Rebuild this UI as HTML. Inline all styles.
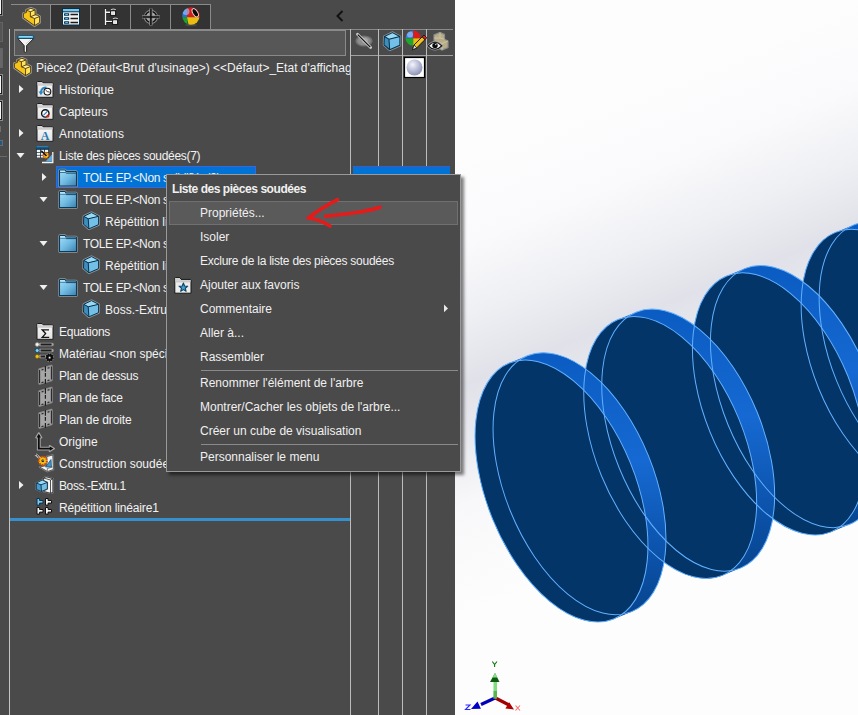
<!DOCTYPE html>
<html><head><meta charset="utf-8">
<style>
*{margin:0;padding:0;box-sizing:border-box}
html,body{width:858px;height:715px;overflow:hidden;background:#4a4a4a}
body{position:relative;font-family:"Liberation Sans",sans-serif;font-size:12px;color:#f2f2f2}
.a{position:absolute}
.t{position:absolute;white-space:nowrap;line-height:14px;height:14px}
.vl{position:absolute;width:1px;background:#bcbcbc}
.hl{position:absolute;height:1px;background:#8a8a8a}
.mi{position:absolute;left:200px;white-space:nowrap;line-height:14px;color:#f0f0f0}
</style></head><body>
<!-- viewport -->
<svg class="a" style="left:0;top:0" width="858" height="715" viewBox="0 0 858 715">
<defs>
<linearGradient id="bg" gradientUnits="userSpaceOnUse" x1="542" y1="353" x2="632" y2="578">
<stop offset="-1" stop-color="#ffffff"/>
</linearGradient>
<linearGradient id="bgg" gradientUnits="userSpaceOnUse" x1="462" y1="153" x2="622" y2="553">
<stop offset="0" stop-color="#fdfdfe"/>
<stop offset="0.2" stop-color="#fafafc"/>
<stop offset="0.36" stop-color="#eeeff3"/>
<stop offset="0.5" stop-color="#e1e2e9"/>
<stop offset="0.62" stop-color="#e9eaef"/>
<stop offset="0.76" stop-color="#f8f8fa"/>
<stop offset="1" stop-color="#fdfdfd"/>
</linearGradient>
<linearGradient id="band" x1="0" y1="0" x2="0" y2="1">
<stop offset="0" stop-color="#0a5cc2"/>
<stop offset="0.4" stop-color="#1669d2"/>
<stop offset="0.75" stop-color="#0b52aa"/>
<stop offset="1" stop-color="#07438a"/>
</linearGradient>
</defs>
<rect x="455" y="0" width="403" height="715" fill="url(#bgg)"/>
<path d="M801.2,303.2 L801.3,298.6 L801.6,294.1 L802.0,289.7 L802.5,285.5 L803.2,281.3 L803.9,277.3 L804.9,273.4 L805.9,269.6 L807.1,265.9 L808.4,262.4 L809.8,259.1 L811.3,255.9 L813.0,252.9 L814.8,250.0 L816.7,247.3 L818.6,244.8 L820.7,242.5 L822.9,240.3 L825.2,238.4 L827.6,236.6 L830.1,235.0 L832.7,233.6 L835.4,232.4 L853.4,225.1 L856.1,224.1 L858.9,223.3 L861.8,222.7 L864.8,222.3 L867.8,222.1 L870.9,222.1 L874.0,222.3 L877.2,222.7 L880.5,223.3 L883.7,224.1 L887.0,225.1 L890.3,226.3 L893.7,227.7 L897.1,229.3 L900.5,231.0 L903.8,233.0 L907.2,235.2 L910.6,237.5 L914.0,240.0 L917.4,242.7 L920.7,245.6 L924.1,248.6 L927.4,251.8 L930.6,255.1 L933.9,258.6 L937.1,262.2 L940.2,266.0 L943.3,269.9 L946.3,274.0 L949.3,278.1 L952.2,282.4 L955.0,286.8 L957.7,291.3 L960.4,295.8 L963.0,300.5 L965.5,305.3 L967.9,310.1 L970.2,315.0 L972.4,319.9 L974.5,324.9 L976.5,330.0 L978.4,335.1 L980.1,340.2 L981.8,345.3 L983.3,350.4 L984.8,355.6 L986.1,360.7 L987.2,365.9 L988.3,371.0 L989.2,376.0 L990.0,381.1 L990.7,386.1 L991.2,391.0 L991.6,395.9 L991.9,400.8 L992.0,405.5 L992.0,410.2 L991.9,414.8 L991.6,419.3 L991.2,423.7 L990.7,427.9 L990.0,432.1 L989.3,436.1 L988.3,440.0 L987.3,443.8 L986.1,447.5 L984.8,451.0 L983.4,454.3 L981.9,457.5 L980.2,460.5 L978.4,463.4 L976.5,466.1 L974.6,468.6 L972.5,470.9 L970.3,473.1 L968.0,475.0 L965.6,476.8 L963.1,478.4 L960.5,479.8 L957.8,481.0 L939.8,488.3 L937.1,489.3 L934.3,490.1 L931.4,490.7 L928.4,491.1 L925.4,491.3 L922.3,491.3 L919.2,491.1 L916.0,490.7 L912.7,490.1 L909.5,489.3 L906.2,488.3 L902.9,487.1 L899.5,485.7 L896.1,484.1 L892.7,482.4 L889.4,480.4 L886.0,478.2 L882.6,475.9 L879.2,473.4 L875.8,470.7 L872.5,467.8 L869.1,464.8 L865.8,461.6 L862.6,458.3 L859.3,454.8 L856.1,451.2 L853.0,447.4 L849.9,443.5 L846.9,439.4 L843.9,435.3 L841.0,431.0 L838.2,426.6 L835.5,422.1 L832.8,417.6 L830.2,412.9 L827.7,408.1 L825.3,403.3 L823.0,398.4 L820.8,393.5 L818.7,388.5 L816.7,383.4 L814.8,378.3 L813.1,373.2 L811.4,368.1 L809.9,363.0 L808.4,357.8 L807.1,352.7 L806.0,347.5 L804.9,342.4 L804.0,337.4 L803.2,332.3 L802.5,327.3 L802.0,322.4 L801.6,317.5 L801.3,312.6 L801.2,307.9Z" fill="url(#band)"/>
<ellipse cx="887.6" cy="360.35" rx="138.2" ry="74.4" transform="rotate(67.8 887.6 360.35)" fill="#033568"/>
<path d="M692.5,346.8 L692.6,342.2 L692.9,337.7 L693.3,333.3 L693.8,329.0 L694.5,324.9 L695.2,320.8 L696.2,316.9 L697.2,313.1 L698.4,309.5 L699.7,306.0 L701.1,302.7 L702.6,299.5 L704.3,296.4 L706.1,293.6 L708.0,290.9 L709.9,288.4 L712.0,286.0 L714.2,283.9 L716.5,281.9 L718.9,280.1 L721.4,278.5 L724.0,277.1 L726.7,275.9 L744.7,268.6 L747.4,267.6 L750.2,266.8 L753.1,266.2 L756.1,265.8 L759.1,265.6 L762.2,265.6 L765.3,265.8 L768.5,266.2 L771.8,266.8 L775.0,267.6 L778.3,268.6 L781.6,269.8 L785.0,271.2 L788.4,272.8 L791.8,274.6 L795.1,276.6 L798.5,278.7 L801.9,281.0 L805.3,283.6 L808.7,286.2 L812.0,289.1 L815.4,292.1 L818.7,295.3 L821.9,298.6 L825.2,302.1 L828.4,305.8 L831.5,309.6 L834.6,313.5 L837.6,317.5 L840.6,321.7 L843.5,325.9 L846.3,330.3 L849.0,334.8 L851.7,339.4 L854.3,344.1 L856.8,348.8 L859.2,353.6 L861.5,358.5 L863.7,363.5 L865.8,368.5 L867.8,373.5 L869.7,378.6 L871.4,383.7 L873.1,388.9 L874.6,394.0 L876.1,399.1 L877.4,404.3 L878.5,409.4 L879.6,414.5 L880.5,419.6 L881.3,424.6 L882.0,429.6 L882.5,434.6 L882.9,439.5 L883.2,444.3 L883.3,449.1 L883.3,453.7 L883.2,458.3 L882.9,462.8 L882.5,467.2 L882.0,471.5 L881.3,475.6 L880.6,479.7 L879.6,483.6 L878.6,487.4 L877.4,491.0 L876.1,494.5 L874.7,497.8 L873.2,501.0 L871.5,504.1 L869.7,506.9 L867.8,509.6 L865.9,512.1 L863.8,514.5 L861.6,516.6 L859.3,518.6 L856.9,520.4 L854.4,522.0 L851.8,523.4 L849.1,524.6 L831.1,531.9 L828.4,532.9 L825.6,533.7 L822.7,534.3 L819.7,534.7 L816.7,534.9 L813.6,534.9 L810.5,534.7 L807.3,534.3 L804.0,533.7 L800.8,532.9 L797.5,531.9 L794.2,530.7 L790.8,529.3 L787.4,527.7 L784.0,525.9 L780.7,523.9 L777.3,521.8 L773.9,519.5 L770.5,516.9 L767.1,514.3 L763.8,511.4 L760.4,508.4 L757.1,505.2 L753.9,501.9 L750.6,498.4 L747.4,494.7 L744.3,490.9 L741.2,487.0 L738.2,483.0 L735.2,478.8 L732.3,474.6 L729.5,470.2 L726.8,465.7 L724.1,461.1 L721.5,456.4 L719.0,451.7 L716.6,446.9 L714.3,442.0 L712.1,437.0 L710.0,432.0 L708.0,427.0 L706.1,421.9 L704.4,416.8 L702.7,411.6 L701.2,406.5 L699.7,401.4 L698.4,396.2 L697.3,391.1 L696.2,386.0 L695.3,380.9 L694.5,375.9 L693.8,370.9 L693.3,365.9 L692.9,361.0 L692.6,356.2 L692.5,351.4Z" fill="url(#band)"/>
<ellipse cx="778.9" cy="403.9" rx="138.2" ry="74.4" transform="rotate(67.8 778.9 403.9)" fill="#033568"/>
<path d="M583.8,390.3 L583.9,385.7 L584.2,381.2 L584.6,376.8 L585.1,372.6 L585.8,368.4 L586.5,364.4 L587.5,360.5 L588.5,356.7 L589.7,353.0 L591.0,349.5 L592.4,346.2 L593.9,343.0 L595.6,340.0 L597.4,337.1 L599.3,334.4 L601.2,331.9 L603.3,329.6 L605.5,327.4 L607.8,325.5 L610.2,323.7 L612.7,322.1 L615.3,320.7 L618.0,319.5 L636.0,312.2 L638.7,311.2 L641.5,310.4 L644.4,309.8 L647.4,309.4 L650.4,309.2 L653.5,309.2 L656.6,309.4 L659.8,309.8 L663.1,310.4 L666.3,311.2 L669.6,312.2 L672.9,313.4 L676.3,314.8 L679.7,316.4 L683.1,318.1 L686.4,320.1 L689.8,322.3 L693.2,324.6 L696.6,327.1 L700.0,329.8 L703.3,332.7 L706.7,335.7 L710.0,338.9 L713.2,342.2 L716.5,345.7 L719.7,349.3 L722.8,353.1 L725.9,357.0 L728.9,361.1 L731.9,365.2 L734.8,369.5 L737.6,373.9 L740.3,378.4 L743.0,382.9 L745.6,387.6 L748.1,392.4 L750.5,397.2 L752.8,402.1 L755.0,407.0 L757.1,412.0 L759.1,417.1 L761.0,422.2 L762.7,427.3 L764.4,432.4 L765.9,437.5 L767.4,442.7 L768.7,447.8 L769.8,453.0 L770.9,458.1 L771.8,463.1 L772.6,468.2 L773.3,473.2 L773.8,478.1 L774.2,483.0 L774.5,487.9 L774.6,492.6 L774.6,497.3 L774.5,501.9 L774.2,506.4 L773.8,510.8 L773.3,515.0 L772.6,519.2 L771.9,523.2 L770.9,527.1 L769.9,530.9 L768.7,534.6 L767.4,538.1 L766.0,541.4 L764.5,544.6 L762.8,547.6 L761.0,550.5 L759.1,553.2 L757.2,555.7 L755.1,558.0 L752.9,560.2 L750.6,562.1 L748.2,563.9 L745.7,565.5 L743.1,566.9 L740.4,568.1 L722.4,575.4 L719.7,576.4 L716.9,577.2 L714.0,577.8 L711.0,578.2 L708.0,578.4 L704.9,578.4 L701.8,578.2 L698.6,577.8 L695.3,577.2 L692.1,576.4 L688.8,575.4 L685.5,574.2 L682.1,572.8 L678.7,571.2 L675.3,569.5 L672.0,567.5 L668.6,565.3 L665.2,563.0 L661.8,560.5 L658.4,557.8 L655.1,554.9 L651.7,551.9 L648.4,548.7 L645.2,545.4 L641.9,541.9 L638.7,538.3 L635.6,534.5 L632.5,530.6 L629.5,526.5 L626.5,522.4 L623.6,518.1 L620.8,513.7 L618.1,509.2 L615.4,504.7 L612.8,500.0 L610.3,495.2 L607.9,490.4 L605.6,485.5 L603.4,480.6 L601.3,475.6 L599.3,470.5 L597.4,465.4 L595.7,460.3 L594.0,455.2 L592.5,450.1 L591.0,444.9 L589.7,439.8 L588.6,434.6 L587.5,429.5 L586.6,424.5 L585.8,419.4 L585.1,414.4 L584.6,409.5 L584.2,404.6 L583.9,399.7 L583.8,395.0Z" fill="url(#band)"/>
<ellipse cx="670.2" cy="447.45" rx="138.2" ry="74.4" transform="rotate(67.8 670.2 447.45)" fill="#033568"/>
<path d="M475.1,433.9 L475.2,429.3 L475.5,424.8 L475.9,420.4 L476.4,416.1 L477.1,412.0 L477.8,407.9 L478.8,404.0 L479.8,400.2 L481.0,396.6 L482.3,393.1 L483.7,389.8 L485.2,386.6 L486.9,383.5 L488.7,380.7 L490.6,378.0 L492.5,375.5 L494.6,373.1 L496.8,371.0 L499.1,369.0 L501.5,367.2 L504.0,365.6 L506.6,364.2 L509.3,363.0 L527.3,355.7 L530.0,354.7 L532.8,353.9 L535.7,353.3 L538.7,352.9 L541.7,352.7 L544.8,352.7 L547.9,352.9 L551.1,353.3 L554.4,353.9 L557.6,354.7 L560.9,355.7 L564.2,356.9 L567.6,358.3 L571.0,359.9 L574.4,361.7 L577.7,363.7 L581.1,365.8 L584.5,368.1 L587.9,370.7 L591.3,373.3 L594.6,376.2 L598.0,379.2 L601.3,382.4 L604.5,385.7 L607.8,389.2 L611.0,392.9 L614.1,396.7 L617.2,400.6 L620.2,404.6 L623.2,408.8 L626.1,413.0 L628.9,417.4 L631.6,421.9 L634.3,426.5 L636.9,431.2 L639.4,435.9 L641.8,440.7 L644.1,445.6 L646.3,450.6 L648.4,455.6 L650.4,460.6 L652.3,465.7 L654.0,470.8 L655.7,476.0 L657.2,481.1 L658.7,486.2 L660.0,491.4 L661.1,496.5 L662.2,501.6 L663.1,506.7 L663.9,511.7 L664.6,516.7 L665.1,521.7 L665.5,526.6 L665.8,531.4 L665.9,536.2 L665.9,540.8 L665.8,545.4 L665.5,549.9 L665.1,554.3 L664.6,558.6 L663.9,562.7 L663.2,566.8 L662.2,570.7 L661.2,574.5 L660.0,578.1 L658.7,581.6 L657.3,584.9 L655.8,588.1 L654.1,591.2 L652.3,594.0 L650.4,596.7 L648.5,599.2 L646.4,601.6 L644.2,603.7 L641.9,605.7 L639.5,607.5 L637.0,609.1 L634.4,610.5 L631.7,611.7 L613.7,619.0 L611.0,620.0 L608.2,620.8 L605.3,621.4 L602.3,621.8 L599.3,622.0 L596.2,622.0 L593.1,621.8 L589.9,621.4 L586.6,620.8 L583.4,620.0 L580.1,619.0 L576.8,617.8 L573.4,616.4 L570.0,614.8 L566.6,613.0 L563.3,611.0 L559.9,608.9 L556.5,606.6 L553.1,604.0 L549.7,601.4 L546.4,598.5 L543.0,595.5 L539.7,592.3 L536.5,589.0 L533.2,585.5 L530.0,581.8 L526.9,578.0 L523.8,574.1 L520.8,570.1 L517.8,565.9 L514.9,561.7 L512.1,557.3 L509.4,552.8 L506.7,548.2 L504.1,543.5 L501.6,538.8 L499.2,534.0 L496.9,529.1 L494.7,524.1 L492.6,519.1 L490.6,514.1 L488.7,509.0 L487.0,503.9 L485.3,498.7 L483.8,493.6 L482.3,488.5 L481.0,483.3 L479.9,478.2 L478.8,473.1 L477.9,468.0 L477.1,463.0 L476.4,458.0 L475.9,453.0 L475.5,448.1 L475.2,443.3 L475.1,438.5Z" fill="url(#band)"/>
<ellipse cx="561.5" cy="491.0" rx="138.2" ry="74.4" transform="rotate(67.8 561.5 491.0)" fill="#033568"/>
<g fill="none" stroke="#62b0ff" stroke-width="1">
<ellipse cx="887.6" cy="360.35" rx="138.2" ry="74.4" transform="rotate(67.8 887.6 360.35)"/>
<ellipse cx="905.6" cy="353.05" rx="138.2" ry="74.4" transform="rotate(67.8 905.6 353.05)"/>
<ellipse cx="778.9" cy="403.9" rx="138.2" ry="74.4" transform="rotate(67.8 778.9 403.9)"/>
<ellipse cx="796.9" cy="396.59999999999997" rx="138.2" ry="74.4" transform="rotate(67.8 796.9 396.59999999999997)"/>
<ellipse cx="670.2" cy="447.45" rx="138.2" ry="74.4" transform="rotate(67.8 670.2 447.45)"/>
<ellipse cx="688.2" cy="440.15" rx="138.2" ry="74.4" transform="rotate(67.8 688.2 440.15)"/>
<ellipse cx="561.5" cy="491.0" rx="138.2" ry="74.4" transform="rotate(67.8 561.5 491.0)"/>
<ellipse cx="579.5" cy="483.7" rx="138.2" ry="74.4" transform="rotate(67.8 579.5 483.7)"/>
</g>
</svg>
<!-- left strip -->
<div class="a" style="left:0;top:0;width:3px;height:16px;background:#7e7e7e"></div>
<div class="a" style="left:0;top:0;width:2px;height:15px;background:#1e1e1e"></div>
<div class="a" style="left:0;top:0;width:1px;height:14px;background:#f4f4f4"></div>
<div class="a" style="left:0;top:22px;width:3px;height:20px;background:#636363"></div>
<div class="a" style="left:0;top:23px;width:2px;height:18px;background:#555"></div>
<div class="a" style="left:0;top:48px;width:3px;height:20px;background:#636363"></div>
<div class="a" style="left:0;top:49px;width:2px;height:18px;background:#666"></div>
<div class="a" style="left:0;top:74px;width:3px;height:21px;background:#8a8a8a"></div>
<div class="a" style="left:0;top:75px;width:2px;height:19px;background:#1e1e1e"></div>
<div class="a" style="left:0;top:76px;width:1px;height:17px;background:#f6f6f6"></div>
<div class="a" style="left:0;top:100px;width:3px;height:21px;background:#8a8a8a"></div>
<div class="a" style="left:0;top:101px;width:2px;height:19px;background:#1e1e1e"></div>
<div class="a" style="left:0;top:102px;width:1px;height:17px;background:#f6f6f6"></div>
<div class="a" style="left:0;top:126px;width:1px;height:6px;background:#6e6e6e"></div>
<div class="a" style="left:0;top:140px;width:3px;height:6px;background:#6a6a6a"></div>
<div class="a" style="left:0;top:141px;width:2px;height:4px;background:#1a5a8a"></div>
<div class="hl" style="left:0;top:156px;width:7px;background:#6a6a6a"></div>

<!-- tab bar -->
<div class="hl" style="left:11px;top:4px;width:200px"></div>
<div class="a" style="left:51px;top:5px;width:39px;height:24px;background:#333"></div>
<div class="a" style="left:91px;top:5px;width:39px;height:24px;background:#333"></div>
<div class="a" style="left:131px;top:5px;width:39px;height:24px;background:#333"></div>
<div class="a" style="left:171px;top:5px;width:39px;height:24px;background:#333"></div>
<div class="vl" style="left:50px;top:5px;height:25px;background:#8a8a8a"></div>
<div class="vl" style="left:90px;top:5px;height:25px;background:#8a8a8a"></div>
<div class="vl" style="left:130px;top:5px;height:25px;background:#8a8a8a"></div>
<div class="vl" style="left:170px;top:5px;height:25px;background:#8a8a8a"></div>
<div class="vl" style="left:210px;top:5px;height:25px;background:#8a8a8a"></div>
<!-- collapse chevron -->
<svg class="a" style="left:334px;top:8px" width="12" height="16"><path d="M8.5,3 L3.5,8 L8.5,13" fill="none" stroke="#111" stroke-width="2"/></svg>

<!-- filter box -->
<div class="a" style="left:14px;top:29px;width:332px;height:27px;background:#575757;border:1px solid #8a8a8a;border-top:2px solid #8a8a8a"></div>
<div class="hl" style="left:346px;top:29px;width:107px"></div>
<div class="hl" style="left:351px;top:55px;width:102px;background:#a0a0a0"></div>
<!-- tree left line -->
<div class="vl" style="left:9px;top:29px;height:686px;background:#c4c4c4"></div>
<!-- column separators -->
<div class="vl" style="left:350px;top:29px;height:686px"></div>
<div class="vl" style="left:378px;top:29px;height:686px"></div>
<div class="vl" style="left:402px;top:29px;height:686px"></div>
<div class="vl" style="left:426px;top:29px;height:686px"></div>

<!-- selection highlight -->
<div class="a" style="left:56px;top:166px;width:200px;height:22px;background:#0073d6;border:1px solid #3c64dc"></div>
<div class="a" style="left:353px;top:166px;width:97px;height:8px;background:#0073d6;border-top:1px solid #4458c4"></div>
<!-- rollback bar -->
<div class="a" style="left:10px;top:518px;width:340px;height:3px;background:#3491cd"></div>

<!-- tree text -->
<div class="t" style="left:36px;top:61px;width:314px;overflow:hidden">Pièce2 (Défaut&lt;Brut d'usinage&gt;) &lt;&lt;Défaut&gt;_Etat d'affichage-1&gt;</div>
<div class="t" style="left:59px;top:83px;letter-spacing:0.1px">Historique</div>
<div class="t" style="left:59px;top:105px">Capteurs</div>
<div class="t" style="left:59px;top:127px;letter-spacing:0.15px">Annotations</div>
<div class="t" style="left:59px;top:149px;letter-spacing:-0.3px">Liste des pièces soudées(7)</div>
<div class="t" style="left:83px;top:171px;letter-spacing:-0.35px">TOLE EP.&lt;Non solidifié&gt;(3)</div>
<div class="t" style="left:83px;top:193px;letter-spacing:-0.35px">TOLE EP.&lt;Non solidifié&gt;(3)</div>
<div class="t" style="left:105px;top:215px">Répétition linéaire1</div>
<div class="t" style="left:83px;top:237px;letter-spacing:-0.35px">TOLE EP.&lt;Non solidifié&gt;(2)</div>
<div class="t" style="left:105px;top:259px">Répétition linéaire1</div>
<div class="t" style="left:83px;top:281px;letter-spacing:-0.35px">TOLE EP.&lt;Non solidifié&gt;(2)</div>
<div class="t" style="left:105px;top:303px">Boss.-Extru.1</div>
<div class="t" style="left:59px;top:325px;letter-spacing:-0.25px">Equations</div>
<div class="t" style="left:59px;top:347px">Matériau &lt;non spécifié&gt;</div>
<div class="t" style="left:59px;top:369px;letter-spacing:-0.2px">Plan de dessus</div>
<div class="t" style="left:59px;top:391px;letter-spacing:-0.25px">Plan de face</div>
<div class="t" style="left:59px;top:413px;letter-spacing:-0.1px">Plan de droite</div>
<div class="t" style="left:59px;top:435px">Origine</div>
<div class="t" style="left:59px;top:457px">Construction soudée</div>
<div class="t" style="left:59px;top:479px;letter-spacing:-0.4px">Boss.-Extru.1</div>
<div class="t" style="left:59px;top:501px;letter-spacing:-0.15px">Répétition linéaire1</div>

<!-- expanders -->
<svg class="a" style="left:0;top:0" width="350" height="520">
<g fill="#f0f0f0">
<path d="M19,85 L23.5,89 L19,93Z"/>
<path d="M19,129 L23.5,133 L19,137Z"/>
<path d="M16.5,153 L24.5,153 L20.5,158Z"/>
<path d="M42,173 L46.5,177 L42,181Z"/>
<path d="M39.5,197 L47.5,197 L43.5,202Z"/>
<path d="M39.5,241 L47.5,241 L43.5,246Z"/>
<path d="M39.5,285 L47.5,285 L43.5,290Z"/>
<path d="M19,481 L23.5,485 L19,489Z"/>
</g>
</svg>

<svg class="a" style="left:0;top:0" width="455" height="715" viewBox="0 0 455 715">
<defs>
<linearGradient id="gfold" x1="0" y1="0" x2="1" y2="1"><stop offset="0" stop-color="#a6e0f8"/><stop offset="0.5" stop-color="#72bce4"/><stop offset="1" stop-color="#3a82ae"/></linearGradient>
<linearGradient id="gwf" x1="0" y1="0" x2="0" y2="1"><stop offset="0" stop-color="#fafafa"/><stop offset="1" stop-color="#e2e2e2"/></linearGradient>
<radialGradient id="gsph" cx="0.38" cy="0.32" r="0.7"><stop offset="0" stop-color="#f4f5fb"/><stop offset="0.55" stop-color="#b9bdd6"/><stop offset="1" stop-color="#8d92b4"/></radialGradient>
<symbol id="part" overflow="visible">
<path d="M1.4,6.4 L4.4,5.4 L4.4,3.2 L8.9,1.3 L13.1,2.9 L13.1,7.9 L15.2,8.1 L17.6,9.5 L17.6,15.5 L12.5,18.6 L1.4,10.6Z" fill="none" stroke="#9c9c9c" stroke-width="2.6" stroke-linejoin="round"/>
<path d="M1.4,6.4 L4.4,5.4 L4.4,3.2 L8.9,1.3 L13.1,2.9 L13.1,7.9 L15.2,8.1 L17.6,9.5 L17.6,15.5 L12.5,18.6 L1.4,10.6Z" fill="#f4c419"/>
<path d="M4.4,3.2 L8.9,1.3 L13.1,2.9 L8.4,4.7Z" fill="#fff2a6"/>
<path d="M8.4,4.7 L13.1,2.9 L13.1,7.9 L8.4,9.8Z" fill="#fde65e"/>
<path d="M8.4,9.8 L13.1,7.9 L17.6,9.5 L12.6,11.5Z" fill="#fff0a0"/>
<path d="M12.6,11.5 L17.6,9.5 L17.6,15.5 L12.5,18.6Z" fill="#fde45a"/>
<path d="M1.4,6.4 L4.4,5.4 L4.4,3.2 L8.9,1.3 L13.1,2.9 L13.1,7.9 L15.2,8.1 L17.6,9.5 L17.6,15.5 L12.5,18.6 L1.4,10.6Z M4.4,3.2 L8.4,4.7 L13.1,2.9 M8.4,4.7 L8.4,9.8 L12.6,11.5 L17.6,9.5 M12.6,11.5 L12.5,18.6 M8.4,9.8 L13.1,7.9" fill="none" stroke="#4f3500" stroke-width="0.9" stroke-linejoin="round"/>
</symbol>
<symbol id="wfold" overflow="visible">
<path d="M0.5,16.3 L0.5,1 Q0.5,0.5 1,0.5 L5.6,0.5 L6.6,2 L16,2 L16.5,2.5 L16.5,16.3Z" fill="url(#gwf)" stroke="#1e1e1e" stroke-width="1"/>
<path d="M1,1 L5.4,1 L6.4,2.5 L16,2.5 L16,4 L1,4Z" fill="#d4d4d4"/>
<path d="M1,4.2 L16,4.2" stroke="#bdbdbd" stroke-width="0.8"/>
</symbol>
<symbol id="bfold" overflow="visible">
<path d="M0.5,16.5 L0.5,1.2 Q0.5,0.5 1.2,0.5 L6,0.5 L7,2 L17,2 L17.5,2.6 L17.5,16.5Z" fill="none" stroke="#9a9a9a" stroke-width="2.4" stroke-linejoin="round"/>
<path d="M0.5,16.5 L0.5,1.2 Q0.5,0.5 1.2,0.5 L6,0.5 L7,2 L17,2 L17.5,2.6 L17.5,16.5Z" fill="url(#gfold)" stroke="#0b3b5c" stroke-width="1.1" stroke-linejoin="round"/>
<path d="M1.1,3 L6.4,3 L7.2,3.6 L17,3.6" fill="none" stroke="#0b3b5c" stroke-width="0.9"/>
<path d="M1.2,1.2 L5.8,1.2 L6.7,2.7 L1.2,2.7Z" fill="#b8ecff"/>
</symbol>
<symbol id="cube" overflow="visible">
<path d="M0.8,4.3 L8.5,0.6 L15.6,4.3 L15.6,12.6 L5.9,16.9 L0.5,12.2Z" fill="none" stroke="#9a9a9a" stroke-width="2.4" stroke-linejoin="round"/>
<path d="M0.8,4.3 L8.5,0.6 L15.6,4.3 L5.2,6.8Z" fill="#9ad8f4"/>
<path d="M0.8,4.3 L5.2,6.8 L5.9,16.9 L0.5,12.2Z" fill="#3f8dbc"/>
<path d="M5.2,6.8 L15.6,4.3 L15.6,12.6 L5.9,16.9Z" fill="#72c0e8"/>
<path d="M0.8,4.3 L8.5,0.6 L15.6,4.3 L15.6,12.6 L5.9,16.9 L0.5,12.2Z M0.8,4.3 L5.2,6.8 L15.6,4.3 M5.2,6.8 L5.9,16.9" fill="none" stroke="#06334f" stroke-width="1" stroke-linejoin="round"/>
</symbol>
<symbol id="plane" overflow="visible">
<path d="M5.5,3.5 L17.5,0 L17.5,14 L5.5,17.5Z" fill="#a2a2a2" stroke="#8e8e8e" stroke-width="2.4" stroke-linejoin="round"/>
<path d="M5.5,3.5 L17.5,0 L17.5,14 L5.5,17.5Z" fill="#a6a6a6"/>
<path d="M5.6,4 L5.6,17 M17.4,0.6 L17.4,13.5 M7.5,4 L9.5,3.4 M13.5,2.2 L15.5,1.6 M7.5,16.6 L9.5,16 M13.5,14.6 L15.5,14" stroke="#262626" stroke-width="1.1"/>
<path d="M11.4,0 L11.4,18" stroke="#1e1e1e" stroke-width="1.2" stroke-dasharray="5.7,1.3,3.8,2.2,5"/>
</symbol>
</defs>

<!-- tab icons -->
<use href="#part" x="22" y="7"/>
<g>
<rect x="62.5" y="8.5" width="17" height="16.5" fill="#f2f2f2" stroke="#05304e" stroke-width="1"/>
<rect x="62.5" y="8.5" width="17" height="3.3" fill="#7cc8ec" stroke="#05304e" stroke-width="1"/>
<g fill="#05385c"><rect x="64" y="13.2" width="5.2" height="2.6" rx="0.5"/><rect x="64" y="17.2" width="5.2" height="2.6" rx="0.5"/><rect x="64" y="21.2" width="5.2" height="2.6" rx="0.5"/></g>
<g fill="#7cc8ec"><rect x="65.3" y="14.1" width="2.6" height="0.9"/><rect x="65.3" y="18.1" width="2.6" height="0.9"/><rect x="65.3" y="22.1" width="2.6" height="0.9"/></g>
<g stroke="#1a1a1a" stroke-width="1.3"><path d="M70.5,14.5 L78,14.5 M70.5,18.5 L78,18.5 M70.5,22.5 L78,22.5"/></g>
</g>
<g>
<path d="M105.5,8.8 L105.5,25.2 M106,12.3 L110.8,12.3 M106,21.4 L112.8,21.4" stroke="#111" stroke-width="2.6"/>
<path d="M105.5,9 L105.5,25 M106,12.3 L110.8,12.3 M106,21.4 L112.8,21.4" stroke="#f4f4f4" stroke-width="1.4"/>
<rect x="110.6" y="10.8" width="5" height="4.6" fill="#f8f8f8" stroke="#111" stroke-width="1"/>
<rect x="111.8" y="12" width="2.6" height="2.2" fill="#e0e0e0"/>
<path d="M110.8,9.8 Q113,8.3 115.8,9.6" stroke="#d0d0d0" stroke-width="1" fill="none"/>
<rect x="112.6" y="19.8" width="5" height="4.6" fill="#f8f8f8" stroke="#111" stroke-width="1"/>
<rect x="113.8" y="21" width="2.6" height="2.2" fill="#e0e0e0"/>
<path d="M112.8,18.8 Q115,17.3 117.8,18.6" stroke="#d0d0d0" stroke-width="1" fill="none"/>
</g>
<g>
<circle cx="150.9" cy="16.9" r="5.5" fill="#9c9c9c" stroke="#8a8a8a" stroke-width="3.2"/>
<circle cx="150.9" cy="16.9" r="5.5" fill="#a8a8a8" stroke="#101010" stroke-width="1.5"/>
<path d="M142,16.9 L159.8,16.9 M150.9,8.4 L150.9,25.4" stroke="#8a8a8a" stroke-width="3.4"/>
<path d="M142.3,16.9 L159.5,16.9 M150.9,8.7 L150.9,25.1" stroke="#0c0c0c" stroke-width="1.5"/>
</g>
<g>
<ellipse cx="191" cy="25" rx="6" ry="1.3" fill="#555" opacity="0.6"/>
<clipPath id="cs1"><circle cx="190.9" cy="16" r="8.7"/></clipPath>
<g clip-path="url(#cs1)">
<rect x="181" y="6" width="6.5" height="11.5" fill="#2f6fd0"/>
<rect x="187" y="6" width="14" height="11.5" fill="#d81c1c"/>
<rect x="181" y="17.3" width="6.5" height="10" fill="#1aa52a"/>
<path d="M187,17.3 L201,17.3 L201,27 L189,27Z" fill="#e9bd12"/>
<circle cx="186" cy="11.5" r="3.5" fill="#9fd0ff" opacity="0.6"/>
<ellipse cx="195.2" cy="12.7" rx="2.4" ry="4.6" transform="rotate(-32 195.2 12.7)" fill="#0a0a0a" stroke="#f0d0d0" stroke-width="0.9"/>
</g>
</g>

<!-- filter icon -->
<g>
<path d="M17.9,38.5 L24.2,45.6 L24.2,51.6 Q25.4,53 26.6,51.6 L26.6,45.6 L33.6,38.5Z" fill="#f4f4f4" stroke="#151515" stroke-width="0.9" stroke-linejoin="round"/>
<path d="M26,44 L31,39" stroke="#c8c8c8" stroke-width="0.8"/>
<rect x="17.2" y="35.2" width="17" height="3.6" rx="1.6" fill="#0e5a86" />
<rect x="18.4" y="36" width="14.6" height="1.8" rx="0.9" fill="#8ad6f6"/>
</g>
<!-- root part icon -->
<use href="#part" x="13" y="57"/>

<!-- tree icons -->
<use href="#wfold" x="36.5" y="81"/>
<path d="M46.5,87.6 Q41.6,87.6 40.9,92.2" stroke="#2a86c4" stroke-width="2" fill="none"/>
<path d="M38.6,91.4 L43.4,91.4 L40.9,95.2Z" fill="#2a86c4"/>
<circle cx="47.4" cy="91.6" r="3.4" fill="#fff" stroke="#111" stroke-width="1.1"/>
<path d="M47.4,91.6 L45.6,90.2 M47.4,91.6 L49.8,92.2" stroke="#111" stroke-width="0.8"/>
<use href="#wfold" x="36.5" y="103"/>
<circle cx="45.3" cy="113.4" r="3.7" fill="#fafafa" stroke="#111" stroke-width="1.4"/>
<path d="M43.4,115.3 L47.8,110.8" stroke="#2878c0" stroke-width="1.1"/>
<circle cx="47.9" cy="115.9" r="1.5" fill="#e02010"/>
<use href="#wfold" x="36.5" y="125"/>
<text x="45" y="140" font-family="Liberation Serif" font-weight="bold" font-size="12" fill="#2a78b4" text-anchor="middle">A</text>

<g>
<rect x="36" y="146" width="13" height="12" fill="#1a2a36"/>
<rect x="36" y="146" width="13" height="3" fill="#0a4a76"/>
<rect x="36.5" y="146.4" width="12" height="0.8" fill="#4aa0d0"/>
<g fill="#f4f4f4">
<rect x="36.8" y="149.8" width="3.2" height="2.2"/><rect x="40.8" y="149.8" width="3.4" height="2.2"/><rect x="45" y="149.8" width="3.2" height="2.2"/>
<rect x="36.8" y="152.7" width="3.2" height="2.2"/><rect x="40.8" y="152.7" width="3.4" height="2.2"/><rect x="45" y="152.7" width="3.2" height="2.2"/>
<rect x="36.8" y="155.6" width="3.2" height="2.0"/><rect x="40.8" y="155.6" width="3.4" height="2.0"/>
</g>
<path d="M52.8,152 L52.8,162.5 L42,162.5" stroke="#f2f2f2" stroke-width="1.3" fill="none"/>
<path d="M45.5,161.5 L52,161.5 L52,154.5Z" fill="#5aa8dc"/>
<circle cx="46" cy="155.5" r="2.7" fill="#f2c418" stroke="#d04a00" stroke-width="1.5" stroke-dasharray="1.2,0.9"/>
<path d="M41.2,150.8 L46,155.5" stroke="#111" stroke-width="1.5"/>
<circle cx="46" cy="155.5" r="0.8" fill="#111"/>
</g>

<use href="#bfold" x="59" y="169.5"/>
<use href="#bfold" x="59" y="191"/>
<use href="#cube" x="83" y="212"/>
<use href="#bfold" x="59" y="235"/>
<use href="#cube" x="83" y="256"/>
<use href="#bfold" x="59" y="279"/>
<use href="#cube" x="83" y="300"/>

<use href="#wfold" x="36.5" y="323"/>
<path d="M49,329.8 L42.2,329.8 L45.6,333.6 L42.2,337.4 L49.2,337.4" fill="none" stroke="#111" stroke-width="1.3"/>

<g>
<path d="M40.2,344.5 L52,344.5 M40.2,350.5 L52,350.5 M40.2,356.5 L45.5,356.5" stroke="#a0a0a0" stroke-width="3.6" stroke-linecap="round"/>
<path d="M40.6,344.5 L51.6,344.5 M40.6,350.5 L51.6,350.5 M40.6,356.5 L45,356.5" stroke="#1e1e1e" stroke-width="2" />
<circle cx="37.2" cy="344.5" r="1.9" fill="#f4f4f4" stroke="#8a8a8a" stroke-width="0.7"/>
<circle cx="37.2" cy="350.5" r="2" fill="#86d2f6" stroke="#0a4a72" stroke-width="0.9"/>
<circle cx="37.2" cy="356.5" r="2" fill="#f2c414" stroke="#7a5a00" stroke-width="0.7"/>
<circle cx="49.6" cy="357.6" r="4.4" fill="#a0a0a0" opacity="0.8"/>
<circle cx="49.6" cy="357.6" r="3.4" fill="#0c0c0c" stroke="#0c0c0c" stroke-width="1.6" stroke-dasharray="1.3,1"/>
<rect x="48.7" y="356.7" width="1.8" height="1.8" fill="#f4f4f4"/>
</g>

<use href="#plane" x="34" y="366"/>
<use href="#plane" x="34" y="388"/>
<use href="#plane" x="34" y="410"/>

<g>
<path d="M38.8,435 L38.8,448.6 L51,448.6" fill="none" stroke="#a6a6a6" stroke-width="3.8"/>
<path d="M36,437.6 L38.8,433 L41.6,437.6Z M49.6,445.8 L54.2,448.6 L49.6,451.4Z" fill="#a6a6a6" stroke="#a6a6a6" stroke-width="1.6" stroke-linejoin="round"/>
<path d="M38.8,435.5 L38.8,448.6 L50.5,448.6" fill="none" stroke="#0c0c0c" stroke-width="1.8"/>
<path d="M36.6,437.4 L38.8,433.8 L41,437.4Z M49.8,446.4 L53.4,448.6 L49.8,450.8Z" fill="#0c0c0c"/>
</g>

<g>
<path d="M46.8,456.5 L52.8,455 L53.4,469.5 L47.5,471.5 L39.6,467 L46.8,465.5Z" fill="#f4f4f4" stroke="#9a9a9a" stroke-width="1.6" stroke-linejoin="round"/>
<path d="M46.8,456.5 L52.8,455 L53.4,469.5 L47.5,471.5 L39.6,467 L46.8,465.5Z" fill="#f4f4f4" stroke="#3a3a3a" stroke-width="0.8" stroke-linejoin="round"/>
<path d="M47.5,471.5 L47.2,468.6 L52.6,467" stroke="#555" stroke-width="0.7" fill="none"/>
<path d="M45.5,467 L51,459.5 L51.5,467Z" fill="#3f93cc" stroke="#0b4a70" stroke-width="0.7"/>
<path d="M35.5,454.3 L42.6,460.6" stroke="#e8e8e8" stroke-width="2.4"/>
<path d="M35.5,454.3 L42.6,460.6" stroke="#111" stroke-width="1.3" stroke-dasharray="1,0.8"/>
<circle cx="42.8" cy="460.8" r="4.1" fill="#f0c018" stroke="#d84a06" stroke-width="2" stroke-dasharray="1.6,1.2"/>
<circle cx="42.8" cy="460.8" r="1.3" fill="#111"/>
<circle cx="43" cy="460.6" r="0.5" fill="#fff"/>
</g>

<g>
<path d="M43.5,478 L46,476.6 L53,478.6 L53,492.5 L50.5,493.4 L43.5,491.5Z" fill="#f6f6f6" stroke="#9a9a9a" stroke-width="1.4" stroke-linejoin="round"/>
<path d="M43.5,478 L46,476.6 L53,478.6 L53,492.5 L50.5,493.4 L43.5,491.5Z M43.5,478 L50.5,480 L53,478.6 M50.5,480 L50.5,493.4" fill="none" stroke="#2a2a2a" stroke-width="0.8"/>
<path d="M36.3,483 L42.2,480 L47.4,482.4 L47.4,489 L41.5,491.6 L36.3,489.4Z" fill="#72c0e8" stroke="#9a9a9a" stroke-width="1.4" stroke-linejoin="round"/>
<path d="M36.3,483 L42.2,480 L47.4,482.4 L41,484.8Z" fill="#9ad8f4"/>
<path d="M36.3,483 L41,484.8 L41.5,491.6 L36.3,489.4Z" fill="#4a98c8"/>
<path d="M36.3,483 L42.2,480 L47.4,482.4 L47.4,489 L41.5,491.6 L36.3,489.4Z M36.3,483 L41,484.8 L47.4,482.4 M41,484.8 L41.5,491.6" fill="none" stroke="#06334f" stroke-width="0.9" stroke-linejoin="round"/>
</g>

<g>
<path d="M37,498.5 L39.6,498.5 L39.6,500.5 L43,500.5 L43,503.1 L39.6,503.1 L39.6,505.1 L37,505.1Z" fill="#7ccaf0" stroke="#06334f" stroke-width="1" stroke-linejoin="round"/><path d="M45.5,498.5 L48.1,498.5 L48.1,500.5 L51.5,500.5 L51.5,503.1 L48.1,503.1 L48.1,505.1 L45.5,505.1Z" fill="#f6f6f6" stroke="#101010" stroke-width="1" stroke-linejoin="round"/><path d="M37,507.5 L39.6,507.5 L39.6,509.5 L43,509.5 L43,512.1 L39.6,512.1 L39.6,514.1 L37,514.1Z" fill="#f6f6f6" stroke="#101010" stroke-width="1" stroke-linejoin="round"/><path d="M45.5,507.5 L48.1,507.5 L48.1,509.5 L51.5,509.5 L51.5,512.1 L48.1,512.1 L48.1,514.1 L45.5,514.1Z" fill="#f6f6f6" stroke="#101010" stroke-width="1" stroke-linejoin="round"/>
</g>

<!-- column header icons -->
<g>
<ellipse cx="364" cy="41" rx="8.6" ry="5.6" fill="#7a7a7a" opacity="0.8"/>
<ellipse cx="364" cy="41" rx="6.8" ry="4.2" fill="#8e8e8e"/>
<ellipse cx="365" cy="40.5" rx="3" ry="2.6" fill="#a6a6a6"/>
<path d="M357.5,34.3 L370.6,47.4" stroke="#d0d0d0" stroke-width="2.8" stroke-linecap="round"/>
<path d="M357.8,34.6 L370.3,47.1" stroke="#151515" stroke-width="1.3"/>
</g>
<use href="#cube" x="383.5" y="32" transform="translate(383.5 32) scale(1.05) translate(-383.5 -32)"/>
<g>
<clipPath id="cs2"><circle cx="413.2" cy="38.2" r="7.6"/></clipPath>
<g clip-path="url(#cs2)">
<rect x="405" y="30" width="8.5" height="8.5" fill="#3a78d8"/>
<rect x="413.3" y="30" width="9" height="8.5" fill="#dc1c1c"/>
<rect x="405" y="38.4" width="8.5" height="8.5" fill="#1ca82a"/>
<rect x="413.3" y="38.4" width="9" height="8.5" fill="#e8c010"/>
<circle cx="410" cy="34.5" r="3" fill="#b0d8ff" opacity="0.55"/>
</g>
<path d="M412.5,49.8 L414,45 L422.2,36.8 L425,39.6 L416.8,47.8Z" fill="#f0c020" stroke="#111" stroke-width="0.9"/>
<path d="M422.2,36.8 L424,35 L426.8,37.8 L425,39.6Z" fill="#e02020" stroke="#111" stroke-width="0.8"/>
<path d="M412.5,49.8 L414,45 L416.8,47.8Z" fill="#ddd" stroke="#111" stroke-width="0.7"/>
</g>
<g>
<path d="M434,38 L434,35 L440,32.5 L444.5,34.5 L444.5,39.2 L448,41 L448,47.5 L442,50 L434,46Z" fill="#b6ad88" stroke="#8c8c8c" stroke-width="1.2"/>
<path d="M440,32.5 L440,38 L444.5,39.2 M440,38 L434,38 M442,50 L442,43.5 L448,41 M442,43.5 L437.5,41.5" stroke="#d8cfaa" stroke-width="0.7" fill="none"/>
<path d="M428.3,45.8 Q435,38.8 441.7,45.8 Q435,52.6 428.3,45.8Z" fill="#f4f4f4" stroke="#9a9a9a" stroke-width="2.4"/>
<path d="M428.3,45.8 Q435,38.8 441.7,45.8 Q435,52.6 428.3,45.8Z" fill="#f4f4f4" stroke="#0a0a0a" stroke-width="1.1"/>
<circle cx="435" cy="45.6" r="2.7" fill="#0a0a0a"/>
<circle cx="435.8" cy="44.6" r="0.7" fill="#fff"/>
</g>

<!-- sphere swatch -->
<rect x="404.5" y="57.5" width="20" height="20" fill="#fff" stroke="#000" stroke-width="1.2"/>
<circle cx="414.5" cy="67.5" r="8" fill="url(#gsph)"/>
</svg>

<!-- context menu -->
<div class="a" style="left:166px;top:174px;width:295px;height:298px;background:#4a4a4a;border:1px solid #9a9a9a;box-shadow:3px 3px 3px rgba(0,0,0,0.5)"></div>
<div class="a" style="left:169px;top:201px;width:289px;height:24px;background:#5a5a5a;border:1px solid #707070"></div>
<div class="mi" style="left:172px;top:182px;font-weight:bold;letter-spacing:-0.45px">Liste des pièces soudées</div>
<div class="mi" style="top:206px">Propriétés...</div>
<div class="mi" style="top:230px">Isoler</div>
<div class="mi" style="top:254px;letter-spacing:-0.25px">Exclure de la liste des pièces soudées</div>
<div class="mi" style="top:278px">Ajouter aux favoris</div>
<div class="mi" style="top:302px">Commentaire</div>
<div class="mi" style="top:326px">Aller à...</div>
<div class="mi" style="top:350px">Rassembler</div>
<div class="hl" style="left:201px;top:370px;width:257px;background:#8a8a8a"></div>
<div class="mi" style="top:376px">Renommer l'élément de l'arbre</div>
<div class="mi" style="top:400px">Montrer/Cacher les objets de l'arbre...</div>
<div class="mi" style="top:424px">Créer un cube de visualisation</div>
<div class="hl" style="left:201px;top:444px;width:257px;background:#8a8a8a"></div>
<div class="mi" style="top:450px">Personnaliser le menu</div>
<svg class="a" style="left:0;top:0" width="460" height="300" viewBox="0 0 460 300">
<path d="M174.8,293.2 L174.8,278.2 Q174.8,277.6 175.4,277.6 L180,277.6 L181,279.4 L190.4,279.4 L191,280 L191,293.2Z" fill="#ececec" stroke="#151515" stroke-width="1"/>
<path d="M175.3,278.1 L179.8,278.1 L180.8,279.9 L190.5,279.9 L190.5,281.6 L175.3,281.6Z" fill="#d2d2d2"/>
<path d="M175.3,281.8 L190.5,281.8" stroke="#b8b8b8" stroke-width="0.8"/>
<path d="M183.40,283.00 L184.58,285.98 L187.77,286.18 L185.30,288.22 L186.10,291.32 L183.40,289.60 L180.70,291.32 L181.50,288.22 L179.03,286.18 L182.22,285.98Z" fill="#4a9cc8" stroke="#0a4468" stroke-width="1.1" stroke-linejoin="round"/>
</svg>
<svg class="a" style="left:440px;top:303px" width="10" height="12"><path d="M4,1.6 L8,5.4 L4,9.2Z" fill="#e8e8e8"/></svg>

<!-- red arrow -->
<svg class="a" style="left:0;top:0" width="858" height="715">
<g fill="none" stroke="#e41b1b" stroke-width="3.7" stroke-linecap="round" stroke-linejoin="round">
<path d="M380,207.3 C368,211.5 352,213.3 325.5,216.3"/>
<path d="M337.5,199.6 C327,205 316,212 308.2,218 C316,218.5 322,221 330,226"/>
</g>
</svg>

<!-- triad -->
<svg class="a" style="left:455px;top:650px" width="80" height="65" viewBox="455 650 80 65">
<path d="M495,698 L481,704.5" stroke="#0000b8" stroke-width="3.2" fill="none"/>
<path d="M471,709 L477.5,701.6 L480.9,708.8Z" fill="#0000c8"/>
<path d="M495.5,698 L509,705" stroke="#a00000" stroke-width="3.2" fill="none"/>
<path d="M514,709.5 L505.4,708.6 L509.2,702.2Z" fill="#b00000"/>
<rect x="493.5" y="681" width="3.5" height="17.5" fill="#7ede7e"/>
<path d="M493.5,691 L497,691 L497,698.5 L493.5,698.5Z" fill="#3a9a3a" opacity="0.6"/>
<path d="M495,673 L490,682 L499.5,682Z" fill="#0e5a0e"/>
<path d="M495,673 L492.5,677.5 L497.5,677.5Z" fill="#8be08b"/>
<path d="M492.3,661.5 L494.6,664.5 L497,661.5 M494.6,664.5 L494.6,667" stroke="#107a10" stroke-width="1.1" fill="none"/>
<path d="M465.5,705 L470,705 L465.5,709.5 L470.5,709.5" stroke="#2a2aff" stroke-width="1.1" fill="none"/>
<path d="M515.5,705.5 L520,710.5 M520,705.5 L515.5,710.5" stroke="#ff6a6a" stroke-width="1.1" fill="none"/>
</svg>

</body></html>
